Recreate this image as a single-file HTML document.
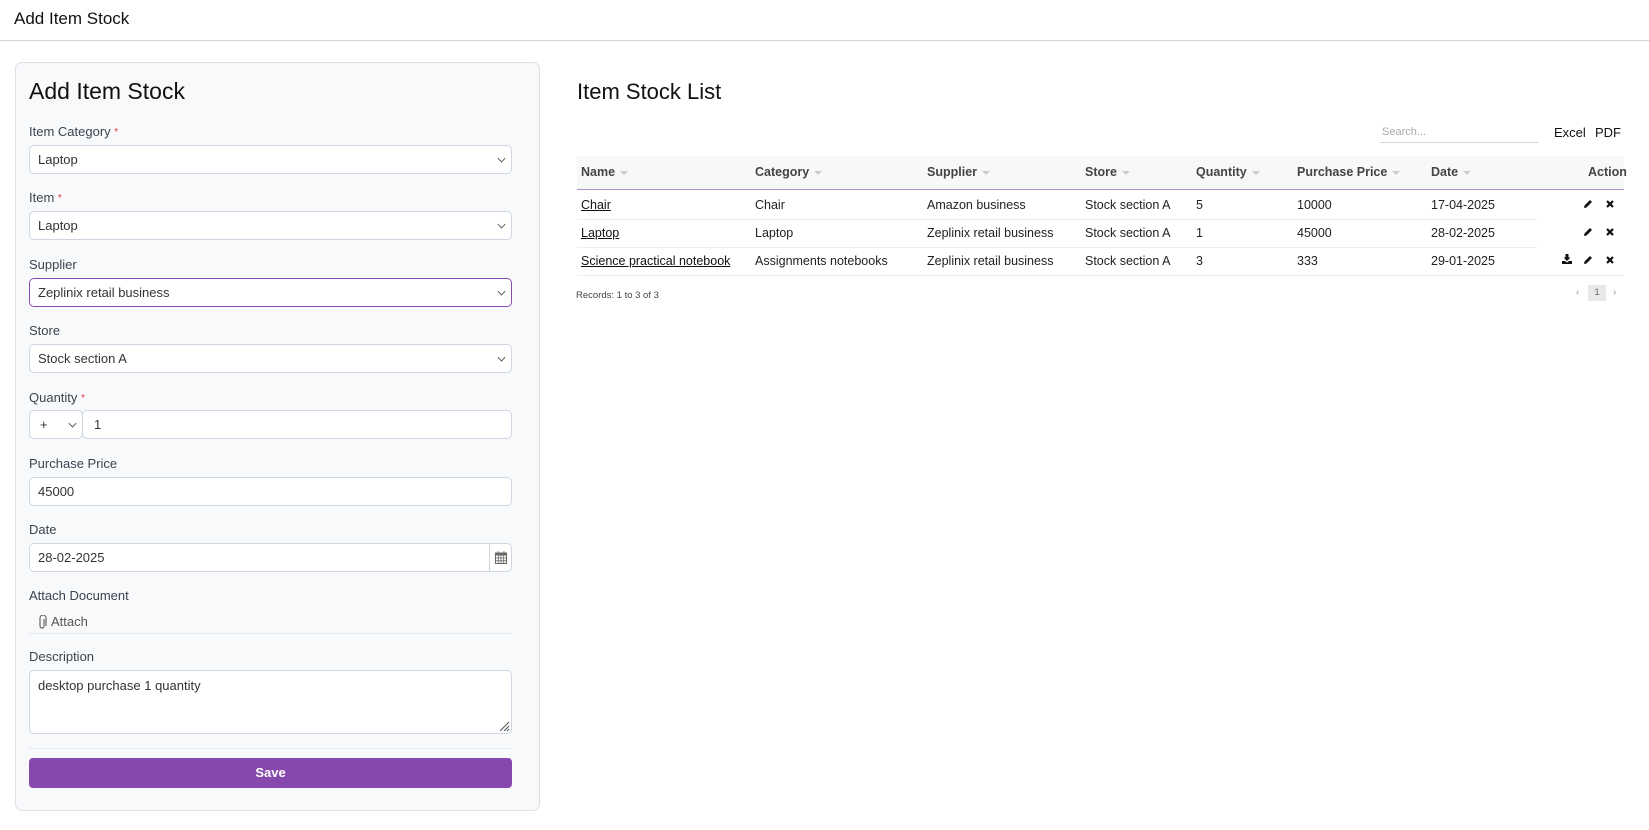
<!DOCTYPE html>
<html><head><meta charset="utf-8"><style>
*{box-sizing:border-box;margin:0;padding:0}
body{width:1649px;height:830px;background:#fff;font-family:"Liberation Sans",Arial,sans-serif;color:#212529;position:relative;overflow:hidden;font-size:13px}
.a{position:absolute}
.top{left:0;top:0;width:1649px;height:41px;border-bottom:1px solid #d0d4da}
.card{left:15px;top:62px;width:525px;height:749px;background:#f8f9fb;border:1px solid #dde1e6;border-radius:7px}
.lbl{left:29px;font-size:13px;color:#3c4450}
.req{color:#e03a4a;font-size:10px;position:relative;top:-1px}
.inp{left:29px;width:483px;height:29px;background:#fff;border:1px solid #cfd6e2;border-radius:5px;font-size:13px;color:#333;padding:0 0 0 8px;line-height:27px}
.chev{position:absolute;right:6px;top:9px;width:7px;height:7px;border-right:1.5px solid #444;border-bottom:1.5px solid #444;transform:rotate(45deg) scale(.8)}
.hd{font-weight:bold;color:#444;font-size:12.5px}
.car{display:inline-block;width:0;height:0;border-left:4px solid transparent;border-right:4px solid transparent;border-top:4px solid #ccc;margin-left:5px;vertical-align:middle}
.cell{font-size:12.5px;color:#222}
.u{text-decoration:underline;color:#111}
.rl{left:577px;width:1047px;height:1px;background:#eceef1}
</style></head><body>
<div class="a top"></div>
<div class="a" style="left:14px;top:9px;font-size:17px;color:#111">Add Item Stock</div>

<div class="a card"></div>
<div class="a" style="left:29px;top:78px;font-size:23px;color:#111">Add Item Stock</div>

<div class="a lbl" style="top:124px">Item Category <span class="req">*</span></div>
<div class="a inp" style="top:145px">Laptop<span class="chev"></span></div>
<div class="a lbl" style="top:190px">Item <span class="req">*</span></div>
<div class="a inp" style="top:211px">Laptop<span class="chev"></span></div>
<div class="a lbl" style="top:257px">Supplier</div>
<div class="a inp" style="top:278px;border-color:#8a4bb0">Zeplinix retail business<span class="chev"></span></div>
<div class="a lbl" style="top:323px">Store</div>
<div class="a inp" style="top:344px">Stock section A<span class="chev"></span></div>
<div class="a lbl" style="top:390px">Quantity <span class="req">*</span></div>
<div class="a inp" style="top:410px;width:54px;padding-left:10px">+<span class="chev"></span></div>
<div class="a inp" style="top:410px;left:82px;width:430px;padding-left:11px">1</div>
<div class="a lbl" style="top:456px">Purchase Price</div>
<div class="a inp" style="top:477px">45000</div>
<div class="a lbl" style="top:522px">Date</div>
<div class="a inp" style="top:543px">28-02-2025</div>
<div class="a" style="left:489px;top:543px;width:1px;height:29px;background:#cfd6e2"></div>
<svg class="a" style="left:495px;top:551px" width="12" height="13" viewBox="0 0 12 13"><rect x="0.5" y="2" width="11" height="10.5" fill="none" stroke="#666"/><rect x="0.5" y="2" width="11" height="2.5" fill="#666"/><path d="M3 0v3M9 0v3M0.5 7h11M0.5 9.8h11M3.3 4.5v8M6 4.5v8M8.7 4.5v8" stroke="#666" stroke-width=".8"/></svg>
<div class="a lbl" style="top:588px">Attach Document</div>
<svg class="a" style="left:37px;top:615px" width="10" height="15" viewBox="0 0 10 15"><path d="M7 4v7a2 2 0 0 1-4 0V3a3 3 0 0 1 6 0v8" fill="none" stroke="#666" stroke-width="1.2"/></svg>
<div class="a" style="left:51px;top:614px;font-size:13px;color:#555">Attach</div>
<div class="a" style="left:29px;top:633px;width:483px;height:1px;background:#e6e9ee"></div>
<div class="a lbl" style="top:649px">Description</div>
<div class="a inp" style="top:670px;height:64px;line-height:normal;padding-top:7px">desktop purchase 1 quantity</div>
<svg class="a" style="left:498px;top:720px" width="12" height="12"><path d="M11 2L2 11M11 6L6 11M11 9L9 11" stroke="#555"/></svg>
<div class="a" style="left:29px;top:748px;width:483px;height:1px;background:#e6e9ee"></div>
<div class="a" style="left:29px;top:758px;width:483px;height:30px;background:#8748ae;border-radius:4px;color:#fff;font-weight:bold;font-size:13px;text-align:center;line-height:30px">Save</div>

<div class="a" style="left:577px;top:79px;font-size:22px;color:#111">Item Stock List</div>
<div class="a" style="left:1382px;top:126px;font-size:11px;color:#aaa">Search...</div>
<div class="a" style="left:1380px;top:142px;width:159px;height:1px;background:#d8d8d8"></div>
<div class="a" style="left:1554px;top:125px;font-size:13px;color:#111">Excel</div>
<div class="a" style="left:1595px;top:125px;font-size:13px;color:#111">PDF</div>

<div class="a" style="left:577px;top:156px;width:1047px;height:34px;background:#f7f8fa;border-bottom:1.5px solid #b08fc3"></div>
<div class="a hd" style="left:581px;top:165px">Name<span class="car"></span></div>
<div class="a hd" style="left:755px;top:165px">Category<span class="car"></span></div>
<div class="a hd" style="left:927px;top:165px">Supplier<span class="car"></span></div>
<div class="a hd" style="left:1085px;top:165px">Store<span class="car"></span></div>
<div class="a hd" style="left:1196px;top:165px">Quantity<span class="car"></span></div>
<div class="a hd" style="left:1297px;top:165px">Purchase Price<span class="car"></span></div>
<div class="a hd" style="left:1431px;top:165px">Date<span class="car"></span></div>
<div class="a hd" style="left:1588px;top:165px">Action</div>

<div class="a cell" style="left:581px;top:198px"><span class="u">Chair</span></div>
<div class="a cell" style="left:755px;top:198px">Chair</div>
<div class="a cell" style="left:927px;top:198px">Amazon business</div>
<div class="a cell" style="left:1085px;top:198px">Stock section A</div>
<div class="a cell" style="left:1196px;top:198px">5</div>
<div class="a cell" style="left:1297px;top:198px">10000</div>
<div class="a cell" style="left:1431px;top:198px">17-04-2025</div>
<div class="a rl" style="top:219px;width:960px"></div>
<div class="a cell" style="left:581px;top:226px"><span class="u">Laptop</span></div>
<div class="a cell" style="left:755px;top:226px">Laptop</div>
<div class="a cell" style="left:927px;top:226px">Zeplinix retail business</div>
<div class="a cell" style="left:1085px;top:226px">Stock section A</div>
<div class="a cell" style="left:1196px;top:226px">1</div>
<div class="a cell" style="left:1297px;top:226px">45000</div>
<div class="a cell" style="left:1431px;top:226px">28-02-2025</div>
<div class="a rl" style="top:247px;width:960px"></div>
<div class="a cell" style="left:581px;top:254px"><span class="u">Science practical notebook</span></div>
<div class="a cell" style="left:755px;top:254px">Assignments notebooks</div>
<div class="a cell" style="left:927px;top:254px">Zeplinix retail business</div>
<div class="a cell" style="left:1085px;top:254px">Stock section A</div>
<div class="a cell" style="left:1196px;top:254px">3</div>
<div class="a cell" style="left:1297px;top:254px">333</div>
<div class="a cell" style="left:1431px;top:254px">29-01-2025</div>
<div class="a rl" style="top:275px"></div>

<svg width="0" height="0" style="position:absolute"><defs>
<symbol id="pen" viewBox="0 0 10 10"><path d="M7 1l2 2-5.5 5.5L1 9l.5-2.5z" fill="#111"/></symbol>
<symbol id="x" viewBox="0 0 10 10"><path d="M2 2l6 6M8 2l-6 6" stroke="#111" stroke-width="2.2"/></symbol>
<symbol id="dl" viewBox="0 0 10 10"><path d="M3.5 0h3v3.5h2L5 7 1.5 3.5h2z M0 7h3l2 1.5L7 7h3v3H0z" fill="#111"/></symbol>
</defs></svg>
<svg class="a" style="left:1583px;top:199px" width="10" height="10"><use href="#pen"/></svg>
<svg class="a" style="left:1605px;top:199px" width="10" height="10"><use href="#x"/></svg>
<svg class="a" style="left:1583px;top:227px" width="10" height="10"><use href="#pen"/></svg>
<svg class="a" style="left:1605px;top:227px" width="10" height="10"><use href="#x"/></svg>
<svg class="a" style="left:1562px;top:254px" width="10" height="10"><use href="#dl"/></svg>
<svg class="a" style="left:1583px;top:255px" width="10" height="10"><use href="#pen"/></svg>
<svg class="a" style="left:1605px;top:255px" width="10" height="10"><use href="#x"/></svg>

<div class="a" style="left:576px;top:290px;font-size:9.5px;color:#444">Records: 1 to 3 of 3</div>
<div class="a" style="left:1576px;top:287px;font-size:10px;color:#999">‹</div>
<div class="a" style="left:1588px;top:285px;width:18px;height:16px;background:#e9e9e9;font-size:9.5px;color:#666;text-align:center;line-height:16px">1</div>
<div class="a" style="left:1613px;top:287px;font-size:10px;color:#999">›</div>
</body></html>
